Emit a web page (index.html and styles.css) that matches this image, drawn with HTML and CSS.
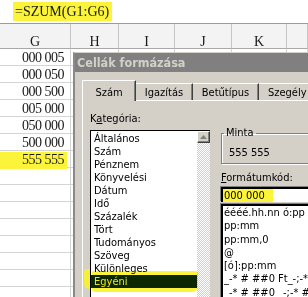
FILE: index.html
```html
<!DOCTYPE html>
<html lang="hu">
<head>
<meta charset="utf-8">
<link rel="stylesheet" href="styles.css">
</head>
<body>
<div class="screen">
  <div class="formula"><span class="hl">=SZUM(G1:G6)</span></div>
  <div class="sheet">
    <div class="ch">G</div><div class="ch">H</div><div class="ch">I</div><div class="ch">J</div><div class="ch">K</div><div class="ch"></div>
    <div class="c v">000 005</div><div class="c"></div><div class="c"></div><div class="c"></div><div class="c"></div><div class="c"></div>
    <div class="c v">000 050</div><div class="c"></div><div class="c"></div><div class="c"></div><div class="c"></div><div class="c"></div>
    <div class="c v">000 500</div><div class="c"></div><div class="c"></div><div class="c"></div><div class="c"></div><div class="c"></div>
    <div class="c v">005 000</div><div class="c"></div><div class="c"></div><div class="c"></div><div class="c"></div><div class="c"></div>
    <div class="c v">050 000</div><div class="c"></div><div class="c"></div><div class="c"></div><div class="c"></div><div class="c"></div>
    <div class="c v">500 000</div><div class="c"></div><div class="c"></div><div class="c"></div><div class="c"></div><div class="c"></div>
    <div class="c v sum"><span class="sumhl">555 555</span></div><div class="c"></div><div class="c"></div><div class="c"></div><div class="c"></div><div class="c"></div>
    <div class="c"></div><div class="c"></div><div class="c"></div><div class="c"></div><div class="c"></div><div class="c"></div>
    <div class="c"></div><div class="c"></div><div class="c"></div><div class="c"></div><div class="c"></div><div class="c"></div>
    <div class="c"></div><div class="c"></div><div class="c"></div><div class="c"></div><div class="c"></div><div class="c"></div>
    <div class="c"></div><div class="c"></div><div class="c"></div><div class="c"></div><div class="c"></div><div class="c"></div>
    <div class="c"></div><div class="c"></div><div class="c"></div><div class="c"></div><div class="c"></div><div class="c"></div>
    <div class="c"></div><div class="c"></div><div class="c"></div><div class="c"></div><div class="c"></div><div class="c"></div>
    <div class="c"></div><div class="c"></div><div class="c"></div><div class="c"></div><div class="c"></div><div class="c"></div>
    <div class="c"></div><div class="c"></div><div class="c"></div><div class="c"></div><div class="c"></div><div class="c"></div>
  </div>

  <div class="dialog">
    <div class="title">Cellák formázása</div>
    <div class="dbody">
      <div class="tabs">
        <div class="tab active">Szám</div>
        <div class="tab t2">Igazítás</div>
        <div class="tab t3">Betűtípus</div>
        <div class="tab t4">Szegély</div>
      </div>
      <div class="panel">
        <div class="col-left">
          <div class="lbl">K<u>a</u>tegória:</div>
          <div class="listbox">
            <div class="items">
              <div class="it">Általános</div>
              <div class="it">Szám</div>
              <div class="it">Pénznem</div>
              <div class="it">Könyvelési</div>
              <div class="it">Dátum</div>
              <div class="it">Idő</div>
              <div class="it">Százalék</div>
              <div class="it">Tört</div>
              <div class="it">Tudományos</div>
              <div class="it">Szöveg</div>
              <div class="it">Különleges</div>
              <div class="it sel">Egyéni</div>
            </div>
            <div class="scroll">
              <div class="sbtn"><svg width="7" height="4" viewBox="0 0 7 4"><path d="M3.5 0 L7 4 L0 4 Z" fill="#808080"/></svg></div>
            </div>
          </div>
        </div>
        <div class="col-right">
          <fieldset class="group">
            <legend>Minta</legend>
            <div class="sample">555 555</div>
          </fieldset>
          <div class="lbl2"><u>F</u>ormátumkód:</div>
          <div class="input"><span class="hl2">000 000</span></div>
          <div class="codes">
            <div class="cd">éééé.hh.nn ó:pp</div>
            <div class="cd">pp:mm</div>
            <div class="cd">pp:mm,0</div>
            <div class="cd">@</div>
            <div class="cd">[ó]:pp:mm</div>
            <div class="cd">_-* # ##0 Ft_-;-*</div>
            <div class="cd">_-* # ##0 _-;-* #</div>
          </div>
        </div>
        <div class="marker-left"></div>
        <div class="marker"></div>
      </div>
    </div>
  </div>
</div>
</body>
</html>
```

FILE: styles.css
```css
* { box-sizing: border-box; }
html, body { margin: 0; padding: 0; }
body { width: 308px; height: 297px; overflow: hidden; background: #fff; }

.screen {
  position: relative;
  width: 308px;
  height: 297px;
  overflow: hidden;
  font-family: "Liberation Serif", "Times New Roman", serif;
  color: #1a1a1a;
}

.formula {
  height: 24px;
  border-bottom: 1px solid #9c9c9c;
  padding: 2px 0 0 13px;
  font-size: 14px;
  line-height: 19px;
}
.hl { background: #fbf43a; display: inline-block; padding: 0 3px 0 2px; }

.sheet {
  display: grid;
  grid-template-columns: 71px 48px 56px 57px 55px 1fr;
  grid-auto-rows: 17px;
  grid-template-rows: 25px;
}
.ch {
  background: #f3f3f3;
  border-right: 1px solid #c6c6c6;
  border-bottom: 1px solid #a8a8a8;
  text-align: center;
  font-size: 14px;
  line-height: 14px;
  padding-top: 11px;
}
.c {
  border-right: 1px solid #d4d4d4;
  border-bottom: 1px solid #d4d4d4;
  font-size: 14px;
  line-height: 17px;
}
.v { text-align: right; padding-right: 6px; letter-spacing: -0.5px; }
.sum { padding-right: 0; }
.sumhl { display: block; background: #fbf43a; margin: 1px 3px 0 0; padding-right: 3px; height: 17px; line-height: 16px; }

.dialog {
  position: absolute;
  left: 73px;
  top: 52px;
  width: 260px;
  height: 260px;
  background: #d4d0c8;
  border-left: 2px solid #8a8a8a;
  border-top: 1px solid #d4d0c8;
  font-family: "DejaVu Sans Condensed", "DejaVu Sans", sans-serif;
  font-stretch: condensed;
  font-size: 11px;
  color: #000;
}
.title {
  height: 19px;
  background: #808080;
  color: #d4d0c8;
  font-weight: bold;
  font-size: 12.5px;
  line-height: 19px;
  padding-left: 2px;
  white-space: nowrap;
}
.dbody { padding: 8px 0 0 7px; }

.tabs { display: flex; align-items: flex-end; height: 20px; position: relative; z-index: 2; }
.tab {
  height: 17px;
  padding-top: 2px;
  text-align: center;
  border-top: 1px solid #fff;
  border-left: 1px solid #fff;
  border-right: 1px solid #404040;
  box-shadow: inset -1px 0 0 #808080;
  line-height: 13px;
  white-space: nowrap;
}
.tab.active {
  width: 54px;
  height: 21px;
  margin-bottom: -1px;
  padding-top: 5px;
  background: #d4d0c8;
}
.t2 { width: 57px; border-left: none; }
.t3 { width: 66px; border-left: none; }
.t4 { width: 70px; border-left: none; text-align: left; padding-left: 9px; }

.panel {
  position: relative;
  display: flex;
  border-top: 1px solid #fff;
  border-left: 1px solid #fff;
  padding: 11px 0 0 7px;
  height: 200px;
}

.col-left { width: 120px; flex: none; }
.lbl { line-height: 14px; margin: 0 0 2px 0; height: 16px; }
.listbox {
  position: relative;
  z-index: 1;
  display: flex;
  background: #fff;
  border-top: 1px solid #000;
  border-left: 1px solid #000;
  height: 180px;
}
.items { flex: 1; padding-top: 1px; }
.it { line-height: 13px; height: 13px; padding-left: 3px; white-space: nowrap; }
.it.sel { background: #0b2908; color: #f2f06a; }
.scroll {
  width: 13px;
  flex: none;
  background-color: #fff;
  background-image: repeating-conic-gradient(#d4d0c8 0 25%, #fff 0 50%);
  background-size: 2px 2px;
}
.sbtn {
  width: 13px;
  height: 12px;
  background: #d4d0c8;
  border-top: 1px solid #fff;
  border-left: 1px solid #fff;
  border-right: 1px solid #404040;
  border-bottom: 1px solid #404040;
  box-shadow: inset -1px -1px 0 #808080;
  display: flex;
  align-items: center;
  justify-content: center;
}

.col-right { margin-left: 11px; padding-top: 14px; width: 110px; flex: none; }
.group {
  margin: 0;
  padding: 6px 0 4px 2px;
  border: 1px solid #808080;
  box-shadow: inset 1px 1px 0 #fff, 1px 1px 0 #fff;
  min-width: 0;
}
.group legend { padding: 0 2px; line-height: 14px; }
.sample { line-height: 13px; padding-left: 5px; }
.lbl2 { margin-top: 7px; line-height: 13px; }
.input {
  margin-top: 3px;
  height: 15px;
  background: #fff;
  border-top: 2px solid #000;
  border-left: 2px solid #000;
  box-shadow: -1px -1px 0 #808080;
  line-height: 13px;
}
.hl2 { display: block; width: 50px; background: #fbf43a; padding-left: 1px; height: 13px; }
.codes {
  margin-top: 2px;
  height: 100px;
  background: #fff;
  border-top: 2px solid #000;
  border-left: 2px solid #000;
  box-shadow: -1px -1px 0 #808080;
}
.cd { line-height: 13.3px; padding-left: 1px; white-space: nowrap; }

.marker-left {
  position: absolute;
  left: 1px;
  top: 168px;
  width: 10px;
  height: 20px;
  background: #f4ee3c;
  border-radius: 3px 0 0 5px;
}
.marker {
  position: absolute;
  z-index: 2;
  left: 9px;
  top: 170px;
  width: 106px;
  height: 21px;
  background: #fbf43a;
  mix-blend-mode: multiply;
  border-radius: 0 2px 6px 3px;
}
```
